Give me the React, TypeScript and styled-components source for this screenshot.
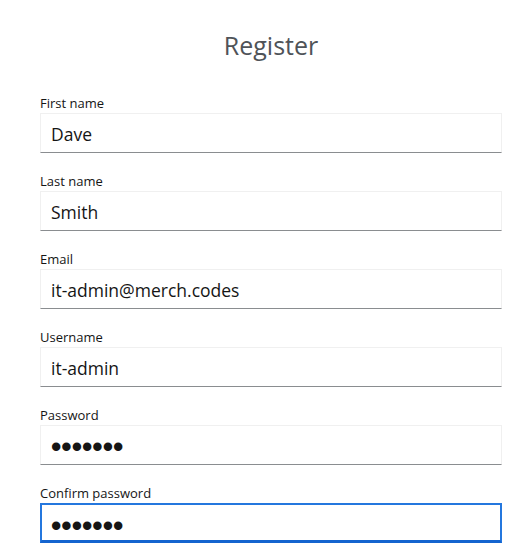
import React from "react";
import styled, { createGlobalStyle } from "styled-components";

const GlobalStyle = createGlobalStyle`
  html, body {
    margin: 0;
    padding: 0;
    background: #ffffff;
  }
  body {
    font-family: "Open Sans", "Noto Sans", sans-serif;
    color: #151515;
  }
`;

const Page = styled.div`
  width: 531px;
  height: 555px;
  overflow: hidden;
  box-sizing: border-box;
  padding: 30px 29px 0 40px;
`;

const Title = styled.h1`
  margin: 0 0 34px 0;
  text-align: center;
  font-family: "Open Sans", sans-serif;
  font-weight: 400;
  font-size: 25px;
  line-height: 30px;
  color: #4f5358;
`;

const Form = styled.form`
  display: flex;
  flex-direction: column;
  gap: 19px;
`;

const Field = styled.div`
  display: flex;
  flex-direction: column;
  gap: 1px;
`;

const Label = styled.label`
  font-size: 13px;
  line-height: 18px;
  color: #151515;
`;

const Input = styled.input<{ $focused?: boolean; $secret?: boolean }>`
  box-sizing: border-box;
  width: 100%;
  height: 40px;
  margin: 0;
  padding: ${(p) => (p.$secret ? (p.$focused ? "7px" : "3px") : "2px")}
    ${(p) => (p.$focused ? "9px" : "10px")} 0;
  font-family: ${(p) => (p.$secret ? '"Liberation Sans", sans-serif' : '"Open Sans", sans-serif')};
  font-size: ${(p) => (p.$secret ? "29.5px" : "17.5px")};
  font-weight: ${(p) => (p.$secret ? 700 : 400)};
  color: #151515;
  background: #ffffff;
  outline: none;
  border: ${(p) => (p.$focused ? "2px solid #2477de" : "1px solid #f0f0f0")};
  border-bottom: ${(p) => (p.$focused ? "3px solid #1464cf" : "1px solid #8a8d90")};
  border-radius: 0;
`;

const fields: { label: string; value: string; type?: string; focused?: boolean }[] = [
  { label: "First name", value: "Dave" },
  { label: "Last name", value: "Smith" },
  { label: "Email", value: "it-admin@merch.codes" },
  { label: "Username", value: "it-admin" },
  { label: "Password", value: "1234567", type: "password" },
  { label: "Confirm password", value: "1234567", type: "password", focused: true },
];

export default function App() {
  return (
    <>
      <GlobalStyle />
      <Page>
        <Title>Register</Title>
        <Form onSubmit={(e) => e.preventDefault()}>
          {fields.map((f) => (
            <Field key={f.label}>
              <Label>{f.label}</Label>
              <Input
                type={f.type ?? "text"}
                defaultValue={f.value}
                readOnly
                $focused={f.focused}
                $secret={f.type === "password"}
              />
            </Field>
          ))}
        </Form>
      </Page>
    </>
  );
}
